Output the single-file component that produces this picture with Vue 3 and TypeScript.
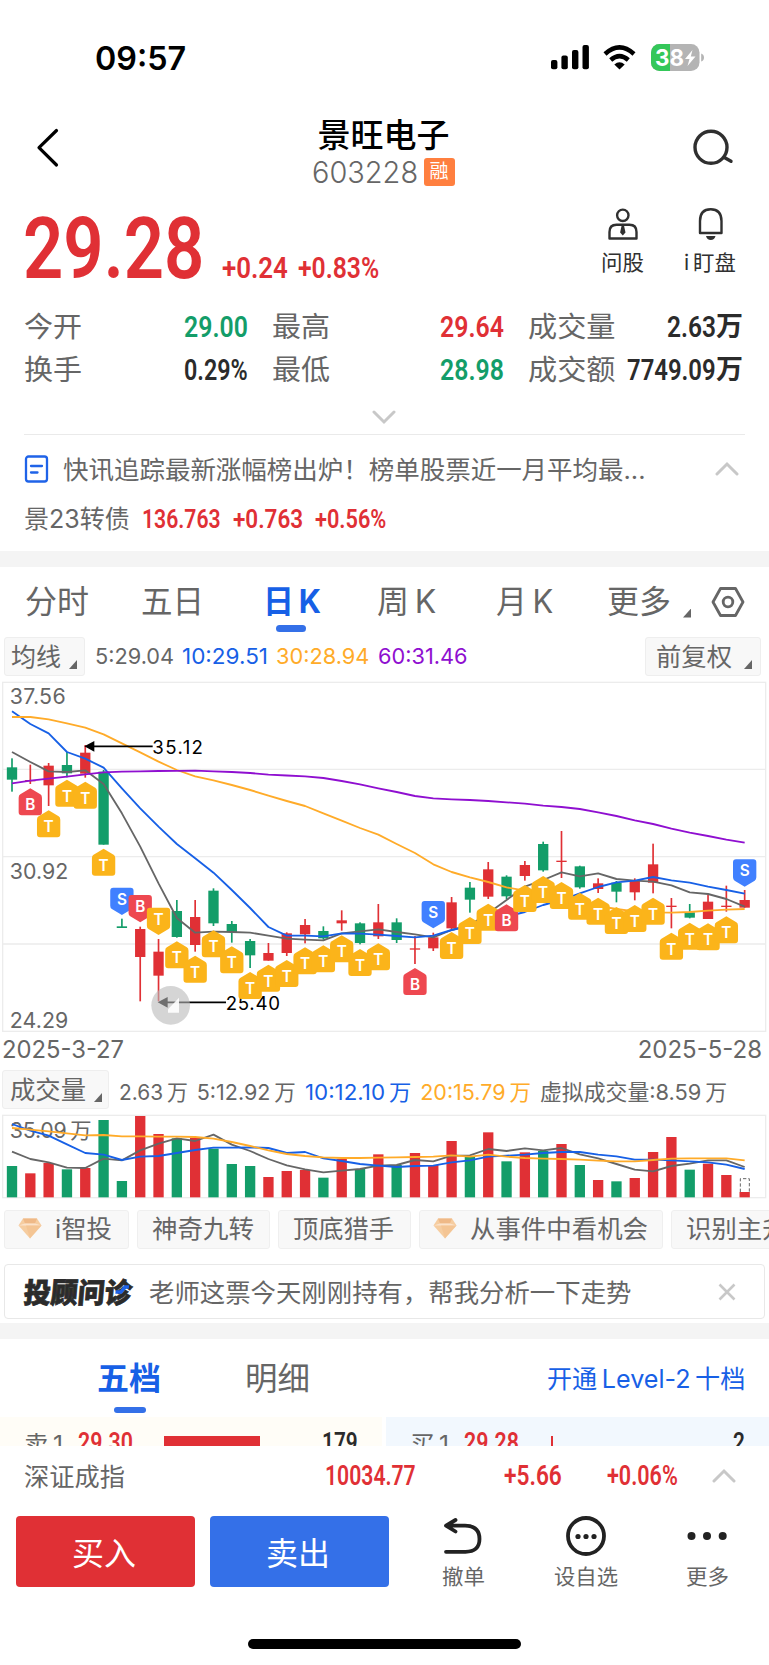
<script setup lang="ts">
import type { Directive } from 'vue'

// Scales a label horizontally so it fills the given width exactly.
const vFit: Directive<HTMLElement, number> = {
  mounted(el, { value }) {
    const natural = el.offsetWidth
    if (!natural) return
    el.style.transform = `scaleX(${value / natural})`
    el.style.marginRight = `${value - natural}px`
  },
}

interface Stat { label: string; labelW: number; value: string; w: number; unit?: string; tone: string }
const stats: Stat[] = [
  { label: '今开', labelW: 58, value: '29.00', w: 64, tone: 'green' },
  { label: '最高', labelW: 58, value: '29.64', w: 64, tone: 'red' },
  { label: '成交量', labelW: 88, value: '2.63', w: 49, unit: '万', tone: 'dark' },
  { label: '换手', labelW: 58, value: '0.29%', w: 64, tone: 'dark' },
  { label: '最低', labelW: 58, value: '28.98', w: 64, tone: 'green' },
  { label: '成交额', labelW: 88, value: '7749.09', w: 89, unit: '万', tone: 'dark' },
]

const periods = [
  { text: '分时', w: 64 },
  { text: '五日', w: 63 },
  { text: '日\u2009K', w: 58, active: true },
  { text: '周\u2009K', w: 59 },
  { text: '月\u2009K', w: 57 },
  { text: '更多', w: 64 },
]

const averages = [
  { text: '5:29.04', w: 79, tone: 'grey' },
  { text: '10:29.51', w: 86, tone: 'blue' },
  { text: '30:28.94', w: 93, tone: 'orange' },
  { text: '60:31.46', w: 90, tone: 'purple' },
]

const volumes = [
  { text: '2.63\u2009万', w: 69, tone: 'grey' },
  { text: '5:12.92\u2009万', w: 99, tone: 'grey' },
  { text: '10:12.10\u2009万', w: 106, tone: 'blue' },
  { text: '20:15.79\u2009万', w: 111, tone: 'orange' },
  { text: '虚拟成交量:8.59\u2009万', w: 187, tone: 'grey' },
]

const STEP = 54.95
const cx = (i: number) => 36 + i * STEP

// [direction, high, body top, body bottom, low]; u = up, d = down
type Candle = [string, number, number, number, number]
const candles: Candle[] = [
  ['d', 235, 262, 299, 335], ['u', 254, 300, 304, 312], ['u', 249, 257, 316, 378], ['d', 216, 255, 280, 292],
  ['u', 195, 218, 281, 293], ['d', 270, 275, 494, 494], ['d', 716, 739, 744, 744], ['u', 740, 747, 831, 964],
  ['u', 777, 815, 887, 964], ['d', 660, 693, 771, 773], ['u', 660, 711, 795, 815], ['d', 625, 632, 730, 738],
  ['d', 723, 732, 756, 788], ['d', 777, 783, 826, 864], ['u', 789, 819, 842, 842], ['u', 757, 760, 819, 828],
  ['u', 717, 735, 763, 790], ['d', 739, 753, 775, 779], ['u', 691, 721, 730, 752], ['d', 727, 730, 789, 793],
  ['u', 672, 727, 769, 777], ['d', 715, 727, 780, 789], ['u', 768, 805, 809, 852], ['u', 758, 772, 805, 813],
  ['u', 651, 667, 745, 747], ['d', 606, 623, 659, 698], ['u', 546, 568, 650, 657], ['d', 586, 590, 649, 657],
  ['u', 543, 555, 588, 602], ['d', 485, 492, 571, 575], ['u', 453, 542, 546, 594], ['d', 557, 559, 622, 626],
  ['u', 595, 610, 627, 639], ['d', 603, 608, 635, 667], ['u', 595, 603, 637, 661], ['u', 491, 553, 608, 640],
  ['u', 654, 677, 681, 745], ['d', 672, 697, 713, 715], ['u', 645, 665, 717, 717], ['u', 617, 677, 681, 695],
  ['u', 630, 660, 683, 683],
]

const ma5 = [216, 246, 274, 276, 271, 312, 400, 500, 610, 714, 758, 755, 756, 758, 767, 776, 779, 781, 760, 754, 748, 756, 763, 772, 750, 735, 700, 660, 620, 600, 577, 589, 580, 597, 602, 605, 616, 637, 642, 657, 680]
const ma10 = [94, 132, 160, 216, 236, 263, 325, 385, 440, 492, 535, 578, 630, 684, 741, 767, 767, 769, 760, 761, 764, 768, 772, 767, 750, 738, 724, 710, 696, 675, 660, 640, 621, 607, 602, 591, 601, 608, 620, 630, 641]
const ma30 = [111, 111, 118, 130, 143, 163, 190, 217, 245, 270, 289, 301, 315, 330, 347, 363, 378, 400, 422, 444, 464, 492, 519, 553, 576, 592, 606, 622, 632, 642, 653, 665, 678, 687, 694, 697, 698, 696, 692, 689, 687]
const ma60 = [310, 302, 296, 290, 283, 277, 275, 274, 273, 272.5, 272, 274, 276, 279, 284, 286.5, 289, 294, 303, 313, 325, 336, 348, 355, 358, 360, 363, 367, 371, 377, 381, 387, 397, 408, 421, 432, 446, 458, 468, 479, 488]

// [index, letter, top edge, pointing direction]
type Marker = [number, string, number, 'up' | 'down']
const markers: Marker[] = [
  [1, 'B', 325, 'up'], [2, 'T', 391, 'up'], [3, 'T', 299, 'up'], [4, 'T', 305, 'up'], [5, 'T', 506, 'up'],
  [6, 'S', 623, 'down'], [7, 'B', 645, 'down'], [8, 'T', 683, 'down'], [9, 'T', 784, 'up'], [10, 'T', 827, 'up'],
  [11, 'T', 751, 'up'], [12, 'T', 799, 'up'], [13, 'T', 876, 'up'], [14, 'T', 854, 'up'], [15, 'T', 840, 'up'],
  [16, 'T', 802, 'up'], [17, 'T', 796, 'up'], [18, 'T', 766, 'up'], [19, 'T', 807, 'up'], [20, 'T', 790, 'up'],
  [22, 'B', 864, 'up'], [23, 'S', 663, 'down'], [24, 'T', 756, 'up'], [25, 'T', 711, 'up'], [26, 'T', 671, 'up'],
  [27, 'B', 673, 'up'], [28, 'T', 615, 'up'], [29, 'T', 588, 'up'], [30, 'T', 606, 'up'], [31, 'T', 638, 'up'],
  [32, 'T', 653, 'up'], [33, 'T', 681, 'up'], [34, 'T', 675, 'up'], [35, 'T', 653, 'up'], [36, 'T', 758, 'up'],
  [37, 'T', 728, 'up'], [38, 'T', 730, 'up'], [39, 'T', 709, 'up'], [40, 'S', 538, 'down'],
]
const upShape = 'M0 0 L30 18 Q35 21 35 28 V72 Q35 81 26 81 H-26 Q-35 81 -35 72 V28 Q-35 21 -30 18 Z'
const downShape = 'M0 82 L30 64 Q35 61 35 54 V9 Q35 0 26 0 H-26 Q-35 0 -35 9 V54 Q-35 61 -30 64 Z'

const barTops: number[] = [408, 430, 399, 418, 414, 270, 453, 258, 312, 325, 323, 356, 402, 408, 441, 423, 420, 443, 387, 417, 373, 405, 369, 405, 333, 381, 307, 394, 367, 363, 342, 405, 450, 454, 444, 366, 321, 419, 401, 435, 486]
const vol5 = [365, 387, 397, 413, 414, 386, 391, 361, 341, 325, 333, 314, 344, 363, 387, 406, 418, 427, 422, 417, 407, 405, 390, 394, 377, 376, 357, 363, 355, 361, 354, 373, 385, 402, 419, 424, 408, 401, 391, 391, 411]
const vol10 = [282, 302, 317, 343, 369, 374, 390, 380, 378, 369, 360, 353, 353, 352, 354, 369, 366, 385, 393, 402, 407, 411, 408, 407, 397, 391, 380, 377, 374, 369, 366, 366, 374, 379, 389, 389, 391, 394, 397, 404, 417]
const vol20 = [294, 299, 304, 310, 316, 315, 319, 319, 320, 320, 321, 326, 336, 348, 361, 372, 378, 382, 384, 384, 383, 382, 381, 380, 376, 380, 374, 380, 384, 386, 387, 389, 392, 394, 394, 390, 386, 385, 385, 385, 391]

const line = (ys: number[]) => ys.map((y, i) => `${cx(i).toFixed(1)},${y}`).join(' ')

const chips = [
  { text: 'i智投', w: 57, gem: true, cls: 'c1' },
  { text: '神奇九转', w: 102, gem: false, cls: 'c2' },
  { text: '顶底猎手', w: 101, gem: false, cls: 'c3' },
  { text: '从事件中看机会', w: 178, gem: true, cls: 'c4' },
  { text: '识别主升浪', w: 127, gem: false, cls: 'c5' },
]
</script>

<template>
  <div class="screen">
    <div class="status">
      <span v-fit="91" class="clock">09:57</span>
      <svg class="status-icons" width="160" height="30" viewBox="548 42 160 30">
        <rect x="551" y="60" width="6.4" height="9.3" rx="2" />
        <rect x="561.4" y="55.5" width="6.4" height="13.8" rx="2" />
        <rect x="572" y="50" width="6.4" height="19.3" rx="2" />
        <rect x="582.5" y="45" width="6.4" height="24.3" rx="2" />
        <g class="wifi">
          <path d="M605 54 Q619.500 40.800 634.000 54" />
          <path d="M610.700 60 Q619.500 52.200 628.300 60" />
        </g>
        <path d="M614.300 64.500 Q619.500 60.200 624.700 64.500 L619.500 69.500 Z" />
        <clipPath id="cell"><rect x="651" y="44" width="48.500" height="27" rx="8.500" /></clipPath>
        <g clip-path="url(#cell)">
          <rect x="651" y="44" width="49" height="27" fill="#b4b4b4" />
          <rect x="651" y="44" width="19" height="27" fill="#34c759" />
        </g>
        <path d="M701.200 53.500 Q704 54.500 704 57.500 T701.200 61.500 Z" fill="#b4b4b4" />
        <text x="655" y="66" class="cell-text" textLength="29" lengthAdjust="spacingAndGlyphs">38</text>
        <path d="M692.500 50 L685 59 H689.500 L687.500 66 L695.500 56.500 H690.800 Z" fill="#fff" />
      </svg>
    </div>

    <header class="header">
      <svg width="80" height="75" viewBox="0 117 80 75" class="stroke back">
        <path d="M56.500 130.500 L39 147.700 L56.500 165" />
      </svg>
      <div class="title">
        <span v-fit="132" class="name">景旺电子</span>
        <div class="code-row">
          <span v-fit="106" class="code">603228</span>
          <span class="badge">融</span>
        </div>
      </div>
      <svg width="80" height="75" viewBox="689 117 80 75" class="stroke find">
        <circle cx="711" cy="147.300" r="16" />
        <path d="M724.800 157.800 L731 161.300" />
      </svg>
    </header>

    <section class="quote">
      <div class="prices">
        <span v-fit="181" class="din price">29.28</span>
        <span v-fit="66" class="din change">+0.24</span>
        <span v-fit="81" class="din change">+0.83%</span>
      </div>
      <div class="tool ask">
        <svg width="36" height="36" viewBox="605.500 206 36 36" class="thin">
          <circle cx="623.300" cy="215.300" r="5.700" />
          <path d="M610 238.500 V232 Q610 224.800 617 224.800 H630 Q637 224.800 637 232 V238.500 Z" />
          <path class="solid" d="M622 226 H624.600 L626 232.500 L623.300 235.500 L620.600 232.500 Z" />
        </svg>
        <span v-fit="43">问股</span>
      </div>
      <div class="tool bell">
        <svg width="36" height="36" viewBox="692 206 36 36" class="thin">
          <path d="M700 233 V221 Q700 209.300 710.700 209.300 T721.500 221 V233 Z" />
          <path class="solid" d="M706 236 H715.500 Q714.500 240 710.750 240 T706 236 Z" />
        </svg>
        <span v-fit="52">i&thinsp;盯盘</span>
      </div>
    </section>

    <section class="stats">
      <div v-for="s in stats" :key="s.label" class="stat">
        <span v-fit="s.labelW" class="stat-label">{{ s.label }}</span>
        <span class="stat-value" :class="s.tone">
          <span v-fit="s.w" class="din">{{ s.value }}</span>
          <span v-if="s.unit" class="unit">{{ s.unit }}</span>
        </span>
      </div>
    </section>
    <div class="expand">
      <svg width="24" height="16" class="chev"><path d="M2 3 L12 13 L22 3" /></svg>
    </div>

    <section class="news">
      <svg width="26" height="28" viewBox="0 0 26 28" class="doc">
        <rect x="2" y="1.500" width="21" height="25" rx="2.500" />
        <path d="M7 11 H18 M7 17.500 H13.500" />
      </svg>
      <span v-fit="583" class="news-text">快讯追踪最新涨幅榜出炉！榜单股票近一月平均最...</span>
      <svg width="24" height="16" class="chev"><path d="M2 13 L12 3 L22 13" /></svg>
    </section>
    <section class="bond">
      <span v-fit="106" class="bond-name">景23转债</span>
      <span v-fit="79" class="din b1">136.763</span>
      <span v-fit="70" class="din b2">+0.763</span>
      <span v-fit="71" class="din b3">+0.56%</span>
    </section>
    <div class="divider"></div>

    <nav class="periods">
      <div v-for="p in periods" :key="p.text" class="period" :class="{ active: p.active }">
        <span v-fit="p.w">{{ p.text }}</span>
      </div>
      <i class="corner"></i>
      <svg width="36" height="32" viewBox="710 585.500 36 32" class="hex">
        <path d="M720.500 588 H735.500 L743 601.500 L735.500 615 H720.500 L713 601.500 Z" />
        <circle cx="728" cy="601.500" r="4.800" />
      </svg>
    </nav>

    <div class="indicator">
      <div class="select ma"><span v-fit="50">均线</span><i class="corner"></i></div>
      <span v-for="a in averages" :key="a.text" v-fit="a.w" class="avg" :class="a.tone">{{ a.text }}</span>
      <div class="select adj"><span v-fit="76">前复权</span><i class="corner"></i></div>
    </div>

    <svg class="chart" width="769" height="352" viewBox="0 0 2307 1056">
      <g class="grid">
        <rect x="8" y="7" width="2289" height="1047" />
        <path d="M8 268 H2297 M8 530 H2297 M8 792 H2297" />
      </g>
      <g class="axis">
        <text x="29" y="73" textLength="168">37.56</text>
        <text x="29" y="597" textLength="176">30.92</text>
        <text x="29" y="1045" textLength="176">24.29</text>
      </g>
      <g v-for="([dir, hi, top, bottom, lo], i) in candles" :key="i" :class="dir">
        <rect :x="cx(i) - 2.500" :y="hi" width="5" :height="lo - hi" />
        <rect :x="cx(i) - 15.500" :y="top" width="31" :height="bottom - top" />
      </g>
      <polyline class="l5" :points="line(ma5)" />
      <polyline class="l10" :points="line(ma10)" />
      <polyline class="l30" :points="line(ma30)" />
      <polyline class="l60" :points="line(ma60)" />
      <g class="note">
        <path d="M275 199 H458 M500 967 H678" />
        <path class="head" d="M253 199 L283 183 V215 Z M473 967 L503 951 V983 Z" />
        <text x="457" y="221" textLength="152">35.12</text>
        <text x="677" y="989" textLength="163">25.40</text>
      </g>
      <g v-for="([i, letter, y, dir], k) in markers" :key="k" :transform="`translate(${cx(i)} ${y})`" class="mark" :class="'m' + letter">
        <path :d="dir === 'up' ? upShape : downShape" />
        <text x="0" :y="dir === 'up' ? 66 : 51">{{ letter }}</text>
      </g>
      <circle class="knob" cx="512" cy="976" r="58" />
      <path class="knob-icon" d="M537 953 V998 H504 V988 Z" />
    </svg>

    <div class="dates">
      <span v-fit="122">2025-3-27</span>
      <span v-fit="124">2025-5-28</span>
    </div>

    <div class="volume-row">
      <div class="select vol"><span v-fit="76">成交量</span><i class="corner"></i></div>
      <span v-for="v in volumes" :key="v.text" v-fit="v.w" class="avg" :class="v.tone">{{ v.text }}</span>
    </div>

    <svg class="volume" width="769" height="90" viewBox="0 240 2307 270">
      <g class="grid"><rect x="8" y="256" width="2289" height="247" /></g>
      <g class="axis"><text x="29" y="323" textLength="246">35.09&thinsp;万</text></g>
      <rect v-for="(t, i) in barTops" :key="i" :x="cx(i) - 15.500" :y="t" width="31" :height="502 - t" :class="candles[i][0]" />
      <path class="ghost" d="M2221 486 V446 H2248 V486" />
      <polyline class="l5" :points="line(vol5)" />
      <polyline class="l10" :points="line(vol10)" />
      <polyline class="l30" :points="line(vol20)" />
    </svg>

    <div class="chips">
      <div v-for="c in chips" :key="c.text" class="chip" :class="c.cls">
        <svg v-if="c.gem" width="24" height="21" viewBox="0 0 24 21" class="gem">
          <path fill="#f6cda0" d="M5 0.500 H19 L23.500 7.500 L12 20.500 L0.500 7.500 Z" />
          <path fill="#efb987" d="M5 0.500 H19 L17 5.500 H7 Z" />
          <path fill="#fbe3cb" d="M0.500 7.500 L7 5.500 H17 L23.500 7.500 Z" />
          <path fill="#f3c08c" d="M8 7.500 H23.500 L12 20.500 Z" opacity=".6" />
        </svg>
        <span v-fit="c.w">{{ c.text }}</span>
      </div>
    </div>

    <div class="advisor">
      <span class="brand">
        <span v-fit="108" class="brand-text">投顾问诊</span>
        <svg class="brand-swoosh" width="14" height="10" viewBox="0 0 14 10"><path d="M13.500 2 H9.500 L6 7 H0.500" /></svg>
      </span>
      <span v-fit="482" class="advisor-text">老师这票今天刚刚持有，帮我分析一下走势</span>
      <svg width="18" height="18" class="close"><path d="M1.500 1.500 L16.500 16.500 M16.500 1.500 L1.500 16.500" /></svg>
    </div>
    <div class="divider second"></div>

    <nav class="book-tabs">
      <span class="book-tab on"><span v-fit="64">五档</span></span>
      <span class="book-tab"><span v-fit="65">明细</span></span>
      <a class="level"><span v-fit="198">开通&thinsp;Level-2&thinsp;十档</span></a>
    </nav>
    <div class="book">
      <div class="side ask-side">
        <span v-fit="39" class="lv">卖&thinsp;1</span>
        <span v-fit="55" class="din red">29.30</span>
        <i class="depth wide"></i>
        <span v-fit="36" class="din dark qty">179</span>
      </div>
      <div class="side bid-side">
        <span v-fit="39" class="lv">买&thinsp;1</span>
        <span v-fit="55" class="din red">29.28</span>
        <i class="depth slim"></i>
        <span v-fit="12" class="din dark qty">2</span>
      </div>
    </div>

    <div class="index">
      <span v-fit="101" class="index-name">深证成指</span>
      <span v-fit="91" class="din">10034.77</span>
      <span v-fit="58" class="din">+5.66</span>
      <span v-fit="71" class="din">+0.06%</span>
      <svg width="24" height="16" class="chev"><path d="M2 13 L12 3 L22 13" /></svg>
    </div>

    <footer class="actions">
      <button class="buy">买入</button>
      <button class="sell">卖出</button>
      <div class="action a1">
        <svg width="46" height="44" viewBox="444 1514 46 44">
          <path d="M459.500 1520 L450 1525.700 L459.500 1531.500 M451 1525.700 H469 Q483.500 1526 483.500 1539 T469 1551.800 H450" />
        </svg>
        <span v-fit="43">撤单</span>
      </div>
      <div class="action a2">
        <svg width="46" height="44" viewBox="564 1514 46 44">
          <circle cx="587" cy="1536" r="18" />
          <g class="dots"><circle cx="579" cy="1536.500" r="2.600" /><circle cx="587" cy="1536.500" r="2.600" /><circle cx="595" cy="1536.500" r="2.600" /></g>
        </svg>
        <span v-fit="64">设自选</span>
      </div>
      <div class="action a3">
        <svg width="46" height="44" viewBox="685 1514 46 44">
          <g class="dots"><circle cx="692.500" cy="1536" r="4" /><circle cx="708" cy="1536" r="4" /><circle cx="723.700" cy="1536" r="4" /></g>
        </svg>
        <span v-fit="43">更多</span>
      </div>
    </footer>
    <div class="home"></div>
  </div>
</template>

<style scoped>
.screen {
  width: 769px;
  height: 1665px;
  overflow: hidden;
  background: #fff;
  color: #666;
  font-family: Inter, "Noto Sans CJK SC", sans-serif;
  display: flex;
  flex-direction: column;
}
.screen > * { flex: none; box-sizing: border-box; }
span { display: inline-block; white-space: nowrap; transform-origin: 0 50%; flex: none; }
svg { display: block; flex: none; }
.din { font-family: Roboto, sans-serif; font-weight: 600; }
.red { color: #e03035; }
.green { color: #139d69; }
.dark { color: #2b2b2b; }
.blue { color: #1760e6; }
.orange { color: #ffab29; }
.purple { color: #8f0fd0; }
.grey { color: #666; }

.status { height: 117px; display: flex; justify-content: space-between; align-items: flex-start; padding: 42px 61px 0 95px; }
.clock { font-size: 33px; font-weight: 600; line-height: 32px; color: #000; }
.status-icons { fill: #000; }
.wifi { fill: none; stroke: #000; stroke-width: 4.5; }
.cell-text { fill: #fff; font: 700 23px Inter, sans-serif; }

.header { height: 75px; display: flex; justify-content: space-between; }
.stroke { fill: none; stroke-linecap: round; stroke-linejoin: round; }
.back { stroke: #000; stroke-width: 3.2; }
.find { stroke: #2f2f2f; stroke-width: 3.4; }
.title { display: flex; flex-direction: column; align-items: center; position: relative; left: -1px; }
.name { font-size: 33px; font-weight: 500; line-height: 36px; color: #000; }
.code-row { display: flex; align-items: center; gap: 5px; height: 37px; }
.code { font-size: 29.5px; font-weight: 300; }
.badge { width: 31px; height: 28px; border-radius: 3px; background: #ff7f3f; color: #fff; font-size: 19px; line-height: 27px; text-align: center; }

.quote { height: 98px; display: flex; padding-left: 23px; }
.prices { display: flex; align-items: baseline; width: 577px; color: #e03035; }
.price { font-size: 85px; line-height: 114px; }
.change { font-size: 29px; }
.prices .change:nth-child(2) { position: relative; left: 18px; }
.prices .change:nth-child(3) { position: relative; left: 28px; }
.tool { display: flex; flex-direction: column; align-items: center; padding-top: 14px; font-size: 21px; color: #303030; }
.tool span { line-height: 30px; margin-top: 6px; }
.ask { width: 45px; }
.bell { width: 54px; margin-left: 38px; }
.thin { fill: none; stroke: #303030; stroke-width: 2.4; stroke-linejoin: round; }
.thin .solid { fill: #303030; stroke: none; }

.stats { margin-top: 16px; height: 85px; padding: 0 26px 0 24px; display: grid; grid-template-columns: 224px 232px 215px; column-gap: 24px; grid-template-rows: 42.5px 42.5px; }
.stat { display: flex; align-items: center; justify-content: space-between; }
.stat-label { font-size: 28.5px; line-height: 42px; }
.stat-value { display: flex; align-items: center; font-size: 29.5px; line-height: 42px; }
.unit { font-size: 27px; font-weight: 700; line-height: 40px; }
.expand { height: 44px; margin: 0 24px; border-bottom: 1px solid #eaeaea; display: flex; justify-content: center; align-items: center; padding: 9px 1px 0 0; }
.chev { fill: none; stroke: #c8c8c8; stroke-width: 3; stroke-linecap: round; }

.news { height: 68px; display: flex; align-items: center; padding: 0 30px 0 24px; }
.doc { fill: none; stroke: #1f63e8; stroke-width: 2.3; stroke-linecap: round; }
.news-text { font-size: 25.4px; margin-left: 13px; position: relative; top: -1.5px; }
.news .chev { margin-left: auto; }
.bond { height: 32px; display: flex; align-items: center; padding: 1px 0 0 24px; font-size: 25px; line-height: 31px; }
.bond .din { font-size: 26px; color: #e03035; position: relative; }
.b1 { left: 12px; }
.b2 { left: 25px; }
.b3 { left: 37px; }
.divider { height: 16px; background: #f4f4f4; margin-top: 16px; }

.periods { height: 70px; display: grid; grid-template-columns: 116px 122px 114px 119px 111px 76px 24px 40px; align-items: center; padding-left: 25px; font-size: 32px; }
.period { position: relative; line-height: 70px; height: 70px; }
.active { color: #1760e6; font-weight: 700; }
.active::after { content: ""; position: absolute; left: 13px; top: 58px; width: 30px; height: 6.5px; border-radius: 4px; background: #3470e8; }
.corner { display: block; width: 8px; height: 9px; background: #666; clip-path: polygon(100% 0, 100% 100%, 0 100%); }
.periods .corner { margin-top: 22px; }
.hex { fill: none; stroke: #666; stroke-width: 2.8; stroke-linejoin: round; margin-left: 3px; }

.indicator, .volume-row { display: flex; align-items: center; height: 39px; padding-left: 4px; }
.select { box-sizing: border-box; height: 39px; background: #f8f8f8; border: 1px solid #eee; border-radius: 3px; display: flex; align-items: center; font-size: 25px; padding-left: 6px; line-height: 36px; }
.select .corner { margin: 16px 0 0 8px; }
.ma { width: 81px; margin-right: 10px; }
.adj { width: 116px; margin-left: auto; margin-right: 8px; padding-left: 10px; }
.adj .corner { margin-left: 12px; }
.avg { font-size: 22px; }
.indicator .avg { position: relative; top: -1px; }
.indicator .avg + .avg { left: 8px; }
.indicator .avg:nth-of-type(3) { left: 16px; }
.indicator .avg:nth-of-type(4) { left: 24px; }

.chart { margin-top: 4px; }
.grid { fill: none; stroke: #ececec; stroke-width: 4; }
.axis text { fill: #666; font: 400 64px Inter, "Noto Sans CJK SC", sans-serif; }
.u { fill: #e03035; }
.d { fill: #139d69; }
polyline { fill: none; stroke-width: 5.5; stroke-linejoin: round; }
.l5 { stroke: #666; }
.l10 { stroke: #1760e6; }
.l30 { stroke: #ffab29; }
.l60 { stroke: #8f0fd0; }
.note path { stroke: #000; stroke-width: 5; }
.note .head { stroke: none; fill: #000; }
.note text { font: 400 56px Inter, sans-serif; fill: #000; }
.mark text { fill: #fff; font: 600 46px Inter, sans-serif; text-anchor: middle; }
.mB path { fill: #ee4850; }
.mT path { fill: #fbb41a; }
.mS path { fill: #4080ff; }
.knob { fill: #b9b9b9; opacity: .6; }
.knob-icon { fill: #fff; opacity: .9; }

.dates { height: 34px; display: flex; justify-content: space-between; align-items: center; padding: 0 7px 0 2px; font-size: 24px; }
.volume-row { margin-top: 4px; padding-left: 2px; }
.vol { width: 107px; padding-left: 7px; margin-right: 10px; }
.volume-row .avg { font-size: 21.5px; position: relative; top: 1px; }
.volume-row .avg:nth-of-type(2) { left: 9px; }
.volume-row .avg:nth-of-type(3) { left: 18px; }
.volume-row .avg:nth-of-type(4) { left: 27px; }
.volume-row .avg:nth-of-type(5) { left: 36px; }
.volume { margin-top: 1px; }
.ghost { fill: #fff; stroke: #666; stroke-width: 3; stroke-dasharray: 10 6; }

.chips { display: flex; gap: 8px; margin-top: 10px; padding-left: 4px; overflow: hidden; }
.chip { box-sizing: border-box; height: 39px; flex: none; display: flex; align-items: center; background: #f8f8f8; border: 1px solid #efefef; border-radius: 3px; font-size: 25px; line-height: 37px; padding-left: 14px; }
.gem { margin: 0 13px 0 -1px; position: relative; top: -1px; }
.c1 { width: 125px; }
.c2 { width: 133px; }
.c3 { width: 133px; }
.c4 { width: 244px; }
.c5 { width: 160px; }

.advisor { height: 55px; margin: 15px 4px 4px; border: 1px solid #e8e8e8; border-radius: 4px; display: flex; align-items: center; padding: 0 28px 0 19px; }
.brand { position: relative; width: 110px; transform: skewX(-5deg); margin-right: 15px; }
.brand-text { color: #2b2b2b; font-size: 28px; font-weight: 900; line-height: 50px; margin-top: 2px; -webkit-text-stroke: .8px #2b2b2b; }
.brand-swoosh { position: absolute; left: 91px; top: 19px; fill: none; stroke: #1f63e8; stroke-width: 3.6; }
.advisor-text { font-size: 25.4px; position: relative; top: -1px; }
.close { fill: none; stroke: #c8c8c8; stroke-width: 2.6; margin-left: auto; }
.second { margin-top: 0; }

.book-tabs { height: 78px; display: grid; grid-template-columns: 148px 302px 1fr; padding-left: 97px; line-height: 79px; }
.book-tab { font-size: 32px; position: relative; }
.on { color: #1760e6; font-weight: 700; }
.on::after { content: ""; position: absolute; left: 17px; top: 68px; width: 32px; height: 6px; border-radius: 3px; background: #3470e8; }
.level { color: #1760e6; font-size: 25.5px; }
.book { height: 29px; display: grid; grid-template-columns: 382px 383px; column-gap: 4px; overflow: hidden; }
.side { display: flex; align-items: center; height: 50px; padding: 0 24px 0 24px; font-size: 24px; }
.side .din { font-size: 26px; margin-left: 15px; }
.ask-side { background: #fffdf7; }
.bid-side { background: #f2f8fe; }
.depth { height: 12px; background: #e03035; align-self: flex-start; margin-top: 19px; }
.wide { width: 96px; margin-left: 31px; }
.slim { width: 2px; margin-left: 32px; }
.side .qty { margin-left: auto; }

.index { height: 59px; display: grid; grid-template-columns: 301px 179px 103px 105px 24px; align-items: center; justify-items: start; padding-left: 24px; font-size: 25px; }
.index-name { position: relative; top: -1px; }
.index .din { font-size: 27px; color: #e03035; }

.actions { height: 82px; display: flex; padding: 11px 0 0 16px; }
button { border: 0; border-radius: 4px; color: #fff; height: 71px; width: 179px; padding: 0 3px 0 0; font: 400 32px/69px "Noto Sans CJK SC", sans-serif; }
.buy { background: #e03035; }
.sell { background: #3470e8; margin-left: 15px; }
.action { display: flex; flex-direction: column; align-items: center; font-size: 21px; margin-top: -2px; }
.action svg { fill: none; stroke: #222; stroke-width: 3.8; stroke-linecap: round; stroke-linejoin: round; }
.action .dots { fill: #222; stroke: none; }
.action span { line-height: 30px; margin-top: 4px; }
.a1 { margin-left: 51px; width: 46px; }
.a2 { margin-left: 67px; width: 65px; }
.a3 { margin-left: 66px; width: 46px; }
.home { width: 273px; height: 10px; border-radius: 5px; background: #000; margin: 52px auto 0; }
</style>
